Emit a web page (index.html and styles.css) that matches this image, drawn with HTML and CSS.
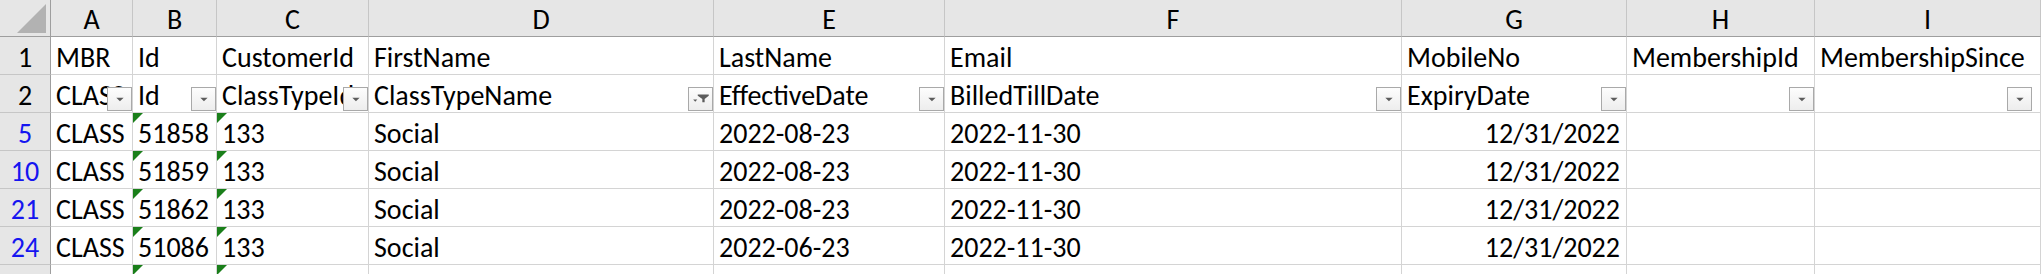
FILE: index.html
```html
<!DOCTYPE html>
<html lang="en">
<head>
    <meta charset="UTF-8">
    <title>Sheet</title>
    <link rel="stylesheet" href="styles.css">
</head>
<body>
    <div class="sheet">
        <!-- column headers -->
        <div class="corner"><span class="corner-mark"></span></div>
        <div class="col-head">A</div>
        <div class="col-head">B</div>
        <div class="col-head">C</div>
        <div class="col-head">D</div>
        <div class="col-head">E</div>
        <div class="col-head">F</div>
        <div class="col-head">G</div>
        <div class="col-head">H</div>
        <div class="col-head">I</div>

        <!-- row 1 -->
        <div class="row-head">1</div>
        <div class="cell">MBR</div>
        <div class="cell">Id</div>
        <div class="cell">CustomerId</div>
        <div class="cell">FirstName</div>
        <div class="cell">LastName</div>
        <div class="cell">Email</div>
        <div class="cell">MobileNo</div>
        <div class="cell">MembershipId</div>
        <div class="cell">MembershipSince</div>

        <!-- row 2 : filter row -->
        <div class="row-head">2</div>
        <div class="cell">CLASS<span class="dd"><svg viewBox="0 0 24 24"><polygon points="8.5,10.5 16.5,10.5 12.5,14.5"/></svg></span></div>
        <div class="cell">Id<span class="dd"><svg viewBox="0 0 24 24"><polygon points="8.5,10.5 16.5,10.5 12.5,14.5"/></svg></span></div>
        <div class="cell">ClassTypeId<span class="dd"><svg viewBox="0 0 24 24"><polygon points="8.5,10.5 16.5,10.5 12.5,14.5"/></svg></span></div>
        <div class="cell">ClassTypeName<span class="dd"><svg viewBox="0 0 24 24"><polygon points="9,7 21,7 21,8.5 16.5,12 16.5,15.5 14,15.5 14,12 9,8.5"/><polygon points="4,12.5 8.5,12.5 6.25,15"/></svg></span></div>
        <div class="cell">EffectiveDate<span class="dd"><svg viewBox="0 0 24 24"><polygon points="8.5,10.5 16.5,10.5 12.5,14.5"/></svg></span></div>
        <div class="cell">BilledTillDate<span class="dd"><svg viewBox="0 0 24 24"><polygon points="8.5,10.5 16.5,10.5 12.5,14.5"/></svg></span></div>
        <div class="cell">ExpiryDate<span class="dd"><svg viewBox="0 0 24 24"><polygon points="8.5,10.5 16.5,10.5 12.5,14.5"/></svg></span></div>
        <div class="cell"><span class="dd"><svg viewBox="0 0 24 24"><polygon points="8.5,10.5 16.5,10.5 12.5,14.5"/></svg></span></div>
        <div class="cell"><span class="dd last"><svg viewBox="0 0 24 24"><polygon points="8.5,10.5 16.5,10.5 12.5,14.5"/></svg></span></div>

        <!-- data rows -->
        <div class="row-head filtered">5</div>
        <div class="cell">CLASS</div>
        <div class="cell flag">51858</div>
        <div class="cell flag">133</div>
        <div class="cell">Social</div>
        <div class="cell">2022-08-23</div>
        <div class="cell">2022-11-30</div>
        <div class="cell num">12/31/2022</div>
        <div class="cell"></div>
        <div class="cell"></div>

        <div class="row-head filtered">10</div>
        <div class="cell">CLASS</div>
        <div class="cell flag">51859</div>
        <div class="cell flag">133</div>
        <div class="cell">Social</div>
        <div class="cell">2022-08-23</div>
        <div class="cell">2022-11-30</div>
        <div class="cell num">12/31/2022</div>
        <div class="cell"></div>
        <div class="cell"></div>

        <div class="row-head filtered">21</div>
        <div class="cell">CLASS</div>
        <div class="cell flag">51862</div>
        <div class="cell flag">133</div>
        <div class="cell">Social</div>
        <div class="cell">2022-08-23</div>
        <div class="cell">2022-11-30</div>
        <div class="cell num">12/31/2022</div>
        <div class="cell"></div>
        <div class="cell"></div>

        <div class="row-head filtered">24</div>
        <div class="cell">CLASS</div>
        <div class="cell flag">51086</div>
        <div class="cell flag">133</div>
        <div class="cell">Social</div>
        <div class="cell">2022-06-23</div>
        <div class="cell">2022-11-30</div>
        <div class="cell num">12/31/2022</div>
        <div class="cell"></div>
        <div class="cell"></div>

        <!-- next row, only its top edge is in view -->
        <div class="row-head filtered"></div>
        <div class="cell"></div>
        <div class="cell flag"></div>
        <div class="cell flag"></div>
        <div class="cell"></div>
        <div class="cell"></div>
        <div class="cell"></div>
        <div class="cell"></div>
        <div class="cell"></div>
        <div class="cell"></div>
    </div>
</body>
</html>
```

FILE: styles.css
```css
* {
    margin: 0;
    padding: 0;
    box-sizing: border-box;
}

body {
    background-color: white;
    overflow: hidden;
    font-family: Carlito, Calibri, 'Liberation Sans', sans-serif;
    font-size: 28px;
    color: #000;
}

.sheet {
    display: grid;
    grid-template-columns: 51px 82px 84px 152px 345px 231px 457px 225px 188px 226px;
    grid-template-rows: 37px repeat(7, 38px);
    width: 2041px;
}

.corner {
    background-color: #e6e6e6;
    border-right: 1px solid #9e9e9e;
    border-bottom: 1px solid #9e9e9e;
    position: relative;
}

.corner-mark {
    position: absolute;
    right: 4px;
    bottom: 3px;
    width: 29px;
    height: 29px;
    background-color: #b2b2b2;
    clip-path: polygon(100% 0, 100% 100%, 0 100%);
}

.col-head {
    background-color: #e6e6e6;
    border-right: 1px solid #c6c6c6;
    border-bottom: 1px solid #9e9e9e;
    display: flex;
    align-items: flex-end;
    justify-content: center;
    line-height: 32px;
}

.row-head {
    grid-column: 1;
    background-color: #e6e6e6;
    border-right: 1px solid #9e9e9e;
    border-bottom: 1px solid #c6c6c6;
    display: flex;
    align-items: flex-end;
    justify-content: center;
    line-height: 32px;
}

.row-head.filtered {
    color: #1515f0;
}

.cell {
    position: relative;
    border-right: 1px solid #d4d4d4;
    border-bottom: 1px solid #d4d4d4;
    display: flex;
    align-items: flex-end;
    padding: 0 5px;
    line-height: 32px;
    white-space: nowrap;
    overflow: hidden;
}

.cell.num {
    justify-content: flex-end;
    padding-right: 6px;
}

/* green "number stored as text" marker */
.cell.flag::before {
    content: '';
    position: absolute;
    left: 0;
    top: 0;
    width: 10px;
    height: 10px;
    background-color: #1a7f1a;
    clip-path: polygon(0 0, 100% 0, 0 100%);
}

/* autofilter dropdown button */
.dd {
    position: absolute;
    right: 0;
    bottom: 1px;
    width: 25px;
    height: 24px;
    border: 1px solid #a9a9a9;
    background: linear-gradient(#fdfdfd, #ededed);
}

.dd.last {
    right: 8px;
}

.dd svg {
    display: block;
    width: 23px;
    height: 22px;
    fill: #5c5c5c;
}
```
